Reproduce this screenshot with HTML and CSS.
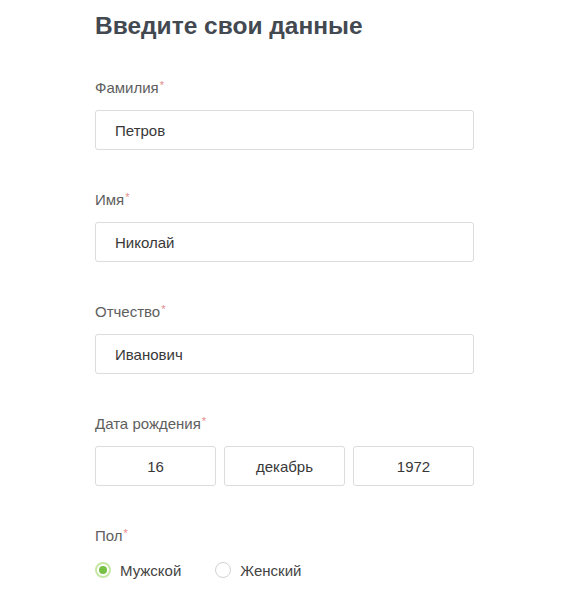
FILE: index.html
```html
<!DOCTYPE html>
<html lang="ru">
<head>
<meta charset="utf-8">
<title>Введите свои данные</title>
<link rel="stylesheet" href="styles.css">
</head>
<body>
<main class="form">
  <h1 class="title">Введите свои данные</h1>

  <div class="field">
    <div class="label">Фамилия<span class="req">*</span></div>
    <div class="input">Петров</div>
  </div>

  <div class="field">
    <div class="label">Имя<span class="req">*</span></div>
    <div class="input">Николай</div>
  </div>

  <div class="field">
    <div class="label">Отчество<span class="req">*</span></div>
    <div class="input">Иванович</div>
  </div>

  <div class="field">
    <div class="label">Дата рождения<span class="req">*</span></div>
    <div class="date-row">
      <div class="input center">16</div>
      <div class="input center">декабрь</div>
      <div class="input center">1972</div>
    </div>
  </div>

  <div class="field">
    <div class="label">Пол<span class="req">*</span></div>
    <div class="radio-row">
      <div class="radio-item"><span class="radio checked"></span>Мужской</div>
      <div class="radio-item"><span class="radio"></span>Женский</div>
    </div>
  </div>
</main>
</body>
</html>
```

FILE: styles.css
```css
html, body {
  margin: 0;
  padding: 0;
  background: #ffffff;
}
body {
  font-family: "Liberation Sans", Arial, sans-serif;
  color: #333333;
}
.form {
  width: 379px;
  padding: 11px 0 0 95px;
  display: flex;
  flex-direction: column;
  gap: 40px;
}
.title {
  margin: 0;
  font-size: 24.5px;
  line-height: 30px;
  font-weight: bold;
  color: #434951;
}
.field {
  display: flex;
  flex-direction: column;
  gap: 12px;
}
.title + .field {
  margin-top: -3px;
}
.label {
  font-size: 15px;
  line-height: 20px;
  color: #5e5e5e;
}
.req {
  color: #e58a8a;
  font-size: 11px;
  line-height: 0;
  vertical-align: 4px;
  margin-left: 1px;
}
.input {
  box-sizing: border-box;
  height: 40px;
  border: 1px solid #dcdcdc;
  border-radius: 3px;
  padding: 0 19px;
  display: flex;
  align-items: center;
  font-size: 15px;
  color: #383838;
  background: #fff;
}
.date-row {
  display: grid;
  grid-template-columns: 121px 121px 121px;
  column-gap: 8px;
}
.input.center {
  justify-content: center;
  padding: 0;
}
.radio-row {
  display: flex;
  align-items: center;
  gap: 34px;
  margin-top: 2px;
  height: 20px;
}
.radio-item {
  display: flex;
  align-items: center;
  gap: 9px;
  font-size: 15px;
  color: #444444;
}
.radio {
  box-sizing: border-box;
  width: 16px;
  height: 16px;
  border-radius: 50%;
  border: 1px solid #d2d2d2;
  background: #fff;
  display: flex;
  align-items: center;
  justify-content: center;
}
.radio.checked {
  border: 2px solid #c6e8a4;
}
.radio.checked::after {
  content: "";
  width: 8px;
  height: 8px;
  border-radius: 50%;
  background: #76c043;
}
```
